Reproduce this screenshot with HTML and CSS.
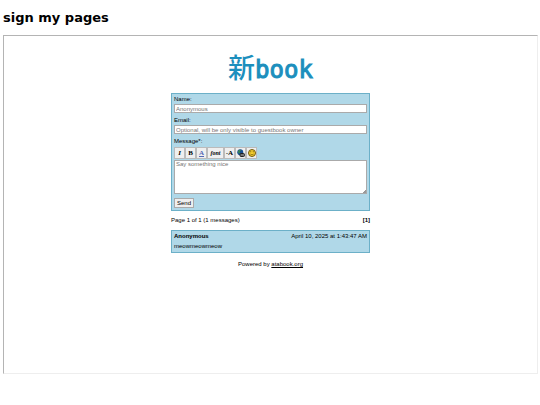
FILE: index.html
```
<!DOCTYPE html>
<html lang="en">
<head>
    <meta charset="UTF-8">
    <meta name="viewport" content="width=device-width, initial-scale=1.0">
    <title>sign my pages</title>
    <link rel="stylesheet" href="styles.css">
</head>
<body>
<h1 class="page-title">sign my pages</h1>

<main class="frame">
    <div class="guestbook">
        <h2 class="logo">新<span class="logo-latin">book</span></h2>

        <form class="panel sign-form" action="#" method="post">
            <label for="name">Name:</label>
            <input type="text" id="name" name="name" placeholder="Anonymous">

            <label for="email">Email:</label>
            <input type="text" id="email" name="email" placeholder="Optional, will be only visible to guestbook owner">

            <label for="message">Message*:</label>
            <div class="toolbar">
                <button type="button" class="tool italic" title="Italic">I</button>
                <button type="button" class="tool" title="Bold">B</button>
                <button type="button" class="tool color" title="Color">A</button>
                <button type="button" class="tool font" title="Font">font</button>
                <button type="button" class="tool" title="Size"><small>-</small>A</button>
                <button type="button" class="tool" title="Link">
                    <svg viewBox="0 0 16 16">
                        <circle cx="6.500" cy="6.500" r="6" fill="#174f91"/>
                        <path d="M2 4l4-3 2 2-3 2 1 3-3 1z" fill="#398b50"/>
                        <rect x="6" y="9" width="9" height="6" rx="2" fill="#777" stroke="#222" stroke-width="2"/>
                    </svg>
                </button>
                <button type="button" class="tool" title="Smiley">
                    <svg viewBox="0 0 16 16">
                        <circle cx="8" cy="8" r="7" fill="#f5cf30" stroke="#6f5810" stroke-width="2"/>
                        <path d="M5.500 4.500v2M10.500 4.500v2" stroke="#4d3b00" stroke-width="1.500"/>
                        <path d="M4.500 10q3.500 3 7 0" fill="none" stroke="#4d3b00"/>
                    </svg>
                </button>
            </div>
            <textarea id="message" name="message" placeholder="Say something nice"></textarea>

            <button type="submit" class="send-btn">Send</button>
        </form>

        <div class="pages">
            <span>Page 1 of 1 (1 messages)</span>
            <b>[1]</b>
        </div>

        <article class="panel entry">
            <header class="entry-header">
                <b>Anonymous</b>
                <time>April 10, 2025 at 1:43:47 AM</time>
            </header>
            <p>meowmeowmeow</p>
        </article>

        <footer class="powered">Powered by <a href="#">atabook.org</a></footer>
    </div>
</main>
</body>
</html>
```
FILE: styles.css
```
* {
    margin: 0;
    padding: 0;
    box-sizing: border-box;
}

body {
    min-height: 100vh;
    display: flex;
    flex-direction: column;
    padding: 10px 2px 31px 3px;
    background: #fff;
    color: #000;
}

.page-title {
    font: bold 13px/16px "DejaVu Sans", sans-serif;
    margin-bottom: 9px;
}

.frame {
    flex: 1;
    padding: 16px;
    border: 1px solid;
    border-color: #b4b4b4 #eee #eee #b4b4b4;
}

.guestbook {
    max-width: 199px;
    margin: 0 auto;
    font: 6px/7px "Liberation Sans", Arial, sans-serif;
}

.guestbook input,
.guestbook textarea,
.guestbook button {
    font-family: inherit;
    font-size: inherit;
}

.logo {
    height: 32px;
    font: 500 27px/30px "Noto Sans CJK JP", sans-serif;
    color: #1c8fbd;
    text-align: center;
    margin-bottom: 9px;
}

.logo-latin {
    font: 24px/30px "DejaVu Sans Mono", monospace;
    -webkit-text-stroke: 1px #1c8fbd;
}

.panel {
    background: #b0d8e8;
    border: 1px solid #6cb0c8;
    padding: 2px;
}

.sign-form label {
    display: block;
}

.sign-form input,
.sign-form textarea {
    display: block;
    width: 100%;
    background: #fff;
    border: 1px solid #aaa;
}

.sign-form input {
    height: 9px;
    padding: 0 1px;
    margin: 1px 0 4px;
}

.sign-form textarea {
    height: 34px;
    padding: 0 1px;
    margin-bottom: 4px;
}

.sign-form textarea::-webkit-resizer {
    background: linear-gradient(135deg, #fff 90%, #999 90%);
}

::placeholder {
    color: #757575;
}

.toolbar {
    display: flex;
    margin: 2px 0 1px;
}

.toolbar .tool {
    display: flex;
    align-items: center;
    justify-content: center;
    width: 11px;
    height: 12px;
    border: 1px solid #bbb;
    background: #efefef;
    color: #000;
    font: bold 7px/8px "Liberation Serif", "Times New Roman", serif;
}

.tool svg {
    flex: none;
    width: 8px;
    height: 8px;
}

.toolbar .italic {
    font-style: italic;
}

.toolbar .color {
    color: #5468b4;
    text-decoration: underline;
}

.toolbar .font {
    width: 17px;
    font-size: 6px;
    font-style: italic;
}

.send-btn {
    display: block;
    height: 10px;
    padding: 0 2px;
    border: 1px solid #aaa;
    background: #efefef;
    color: #000;
    line-height: 7px;
}

.pages {
    display: flex;
    justify-content: space-between;
    padding: 6px 0;
}

.entry-header {
    display: flex;
    justify-content: space-between;
    margin-bottom: 3px;
}

.powered {
    margin-top: 8px;
    text-align: center;
}

.powered a {
    color: #000;
}
```
